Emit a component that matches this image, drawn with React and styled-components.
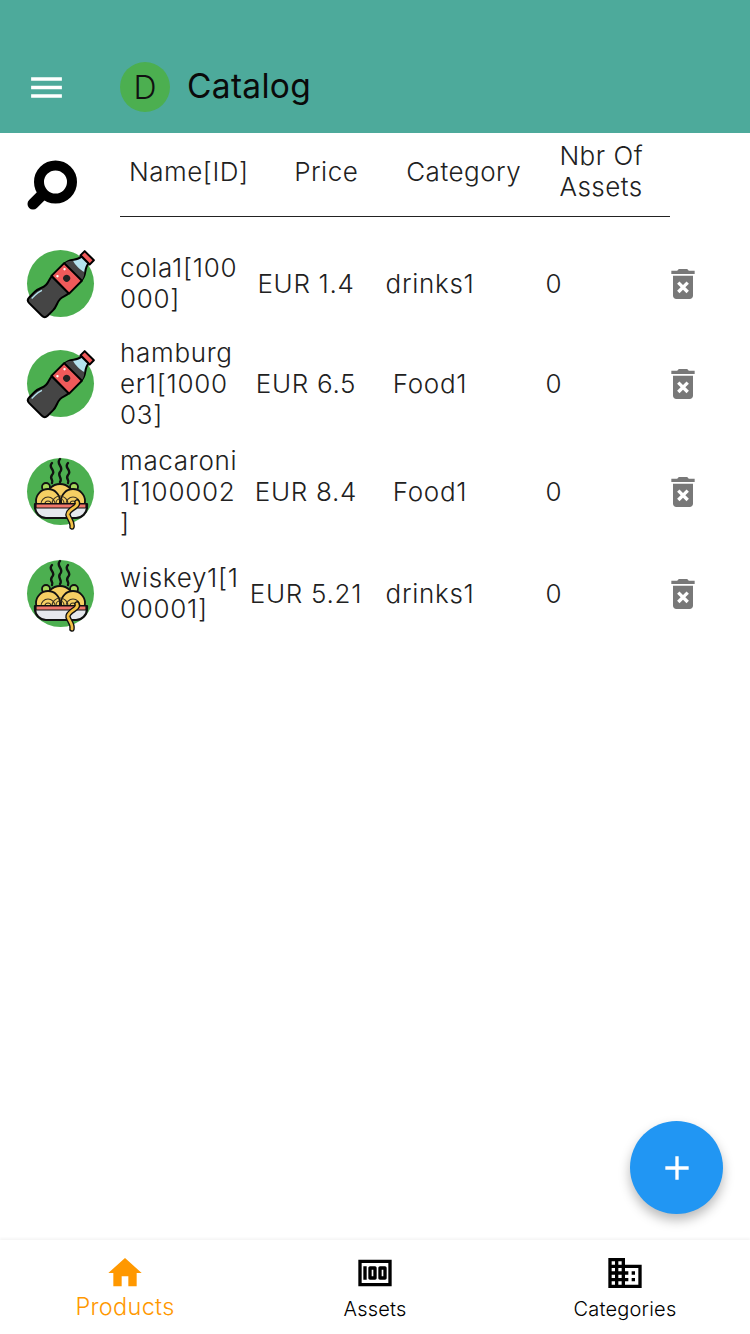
import React from 'react';
import styled, { createGlobalStyle } from 'styled-components';
import { MdMenu, MdHome, MdMoney, MdBusiness, MdDeleteForever, MdAdd } from 'react-icons/md';

const GlobalStyle = createGlobalStyle`
  html, body {
    margin: 0;
    padding: 0;
    background: #ffffff;
    font-family: Inter, "Noto Sans", sans-serif;
  }
`;

const Page = styled.div`
  position: relative;
  display: flex;
  flex-direction: column;
  width: 750px;
  height: 1334px;
  overflow: hidden;
  background: #ffffff;
`;

const Header = styled.header`
  display: flex;
  align-items: center;
  height: 133px;
  padding: 62px 0 21px 26px;
  box-sizing: border-box;
  background: #4daa9b;
`;

const MenuButton = styled.div`
  display: flex;
  width: 94px;
  color: #ffffff;
  font-size: 41px;
`;

const Avatar = styled.div`
  display: flex;
  align-items: center;
  justify-content: center;
  width: 50px;
  height: 50px;
  margin-right: 17px;
  border-radius: 50%;
  background: #4caf50;
  color: #111111;
  font-size: 32px;
  font-weight: 300;
`;

const Title = styled.h1`
  margin: -2px 0 0;
  color: #0a0a0a;
  font-size: 33.5px;
  font-weight: 400;
  letter-spacing: 0.3px;
`;

const Main = styled.main`
  flex: 1;
`;

const TableHead = styled.div`
  display: flex;
  height: 84px;
`;

const SearchCell = styled.div`
  display: flex;
  width: 120px;
  padding: 27px 0 0 27px;
  box-sizing: border-box;
`;

const HeadColumns = styled.div`
  display: grid;
  grid-template-columns: repeat(4, 137.5px);
  width: 550px;
  height: 84px;
  box-sizing: border-box;
  padding-bottom: 7px;
  border-bottom: 1px solid #222222;
`;

const HeadCell = styled.div`
  display: flex;
  align-items: center;
  justify-content: center;
  color: #212121;
  font-size: 26px;
  font-weight: 300;
  letter-spacing: 0.5px;
  line-height: 31px;
  white-space: pre-line;
`;

const Row = styled.div`
  display: grid;
  grid-template-columns: 120px repeat(4, 124px) 134px;
  align-items: center;
  height: ${(p) => p.$height}px;
`;

const Thumb = styled.div`
  display: flex;
  padding-left: 27px;
`;

const NameCell = styled.div`
  width: 122px;
  padding-bottom: 2px;
  color: #212121;
  font-size: 26px;
  font-weight: 300;
  letter-spacing: 0.7px;
  line-height: 31px;
  word-break: break-all;
  line-break: anywhere;
`;

const Cell = styled.div`
  padding-bottom: 2px;
  color: #212121;
  font-size: 26px;
  font-weight: 300;
  letter-spacing: 0.7px;
  line-height: 31px;
  text-align: center;
`;

const DeleteCell = styled.div`
  display: flex;
  justify-content: center;
  color: #787878;
  font-size: 40px;
`;

const Rows = styled.div`
  padding-top: 21px;
`;

const Fab = styled.button`
  position: absolute;
  left: 630px;
  top: 1121px;
  display: flex;
  align-items: center;
  justify-content: center;
  width: 93px;
  height: 93px;
  padding: 0;
  border: none;
  border-radius: 50%;
  background: #2196f3;
  color: #ffffff;
  font-size: 40px;
  box-shadow: 0 6px 12px rgba(0, 0, 0, 0.28);
`;

const BottomNav = styled.nav`
  display: grid;
  grid-template-columns: repeat(3, 1fr);
  height: 94px;
  background: #ffffff;
  box-shadow: 0 -2px 2px rgba(0, 0, 0, 0.04);
`;

const NavItem = styled.div`
  display: flex;
  flex-direction: column;
  align-items: center;
  padding-top: 13px;
  color: ${(p) => (p.$active ? '#ff9800' : '#000000')};
  font-size: 40px;
`;

const NavLabel = styled.span`
  font-size: ${(p) => (p.$active ? 23.5 : 20)}px;
  font-weight: 300;
  letter-spacing: ${(p) => (p.$active ? 0.3 : 0.2)}px;
  line-height: 26px;
  margin-top: ${(p) => (p.$active ? 1 : 3)}px;
`;

const SearchIcon = () => (
  <svg width="52" height="52" viewBox="0 0 52 52">
    <circle cx="28.5" cy="22" r="16.5" fill="none" stroke="#000" strokeWidth="10" />
    <path d="M15 35 L6 44" stroke="#000" strokeWidth="11" strokeLinecap="round" />
  </svg>
);

const BottleIcon = () => (
  <svg width="68" height="68" viewBox="0 0 68 68" overflow="visible">
    <circle cx="33.5" cy="33.5" r="33.5" fill="#4caf50" />
    <g transform="rotate(45 34 34)" strokeLinejoin="round">
      <path d="M27.5 -6 h13 v6 h-13 z" fill="#ef5a5a" stroke="#000" strokeWidth="2" />
      <path d="M29 0 h10 c0 7 7 9 7 17 h-24 c0 -8 7 -10 7 -17 z" fill="#b5e2ee" stroke="#000" strokeWidth="2" />
      <path d="M26 9 c4 1.500 12 1.500 16 0 c2 2 4 5 4 8 h-24 c0 -3 2 -6 4 -8 z" fill="#454545" />
      <path d="M22 35 c0 4 2 6 2 10 c0 5 -3 8 -3 13 v8 c0 3 2 4 4 4 h18 c2 0 4 -1 4 -4 v-8 c0 -5 -3 -8 -3 -13 c0 -4 2 -6 2 -10 z" fill="#454545" stroke="#000" strokeWidth="2" />
      <path d="M25 52 c-1 3 -1.500 5 -1.500 8 v5" fill="none" stroke="#b5e2ee" strokeWidth="1.300" />
      <path d="M21.500 17 h25 v18 h-25 z" fill="#ef5a5a" stroke="#000" strokeWidth="2" />
      <circle cx="34" cy="26" r="3.500" fill="#222" />
      <circle cx="26" cy="21" r="1.200" fill="#fff" />
      <circle cx="26" cy="31" r="1.200" fill="#fff" />
    </g>
  </svg>
);

const NoodleIcon = () => (
  <svg width="68" height="68" viewBox="0 0 68 68" overflow="visible">
    <circle cx="33.500" cy="33.500" r="33.500" fill="#4caf50" />
    <g fill="none" stroke="#111" strokeWidth="2.400" strokeLinecap="round">
      <path d="M25 5 c-5 5 5 7 0 12 c-3 4 2 5 0 8" />
      <path d="M33 1 c-5 5 5 8 0 13 c-3 4 3 6 0 10" />
      <path d="M41 5 c-5 5 5 7 0 12 c-3 4 2 5 0 8" />
    </g>
    <circle cx="19" cy="29" r="4" fill="#a5d65a" stroke="#111" strokeWidth="1.800" />
    <circle cx="47" cy="29" r="4" fill="#a5d65a" stroke="#111" strokeWidth="1.800" />
    <g fill="#f5cf63" stroke="#111" strokeWidth="1.800">
      <circle cx="33" cy="40" r="14" />
      <circle cx="21" cy="43" r="12" />
      <circle cx="46" cy="43" r="12" />
    </g>
    <g fill="none" stroke="#3a3222" strokeWidth="1.100">
      <path d="M25 46 a8 8 0 0 1 16 0" />
      <path d="M29 45 a4 4 0 0 1 8 0" />
      <path d="M14 46 a7 7 0 0 1 14 0" />
      <path d="M39 46 a7 7 0 0 1 14 0" />
      <path d="M18 46 a3 3 0 0 1 6 0" />
      <path d="M43 46 a3 3 0 0 1 6 0" />
    </g>
    <path d="M8 46 h52 v3 c0 6 -5 11 -11 11 h-30 c-6 0 -11 -5 -11 -11 z" fill="#e6e9ee" stroke="#111" strokeWidth="2.200" strokeLinejoin="round" />
    <path d="M9 46 h50 v4 h-50 z" fill="#f0776b" stroke="#111" strokeWidth="1.200" />
    <path d="M50 44 c3 5 -10 7 -9 13 c1 4 5 7 4 12" fill="none" stroke="#111" strokeWidth="5.500" strokeLinecap="round" />
    <path d="M50 44 c3 5 -10 7 -9 13 c1 4 5 7 4 12" fill="none" stroke="#f4c145" strokeWidth="2.800" strokeLinecap="round" />
  </svg>
);

const products = [
  { id: 1, name: 'cola1[100000]', price: 'EUR 1.4', category: 'drinks1', assets: 0, icon: <BottleIcon />, height: 92 },
  { id: 2, name: 'hamburger1[100003]', price: 'EUR 6.5', category: 'Food1', assets: 0, icon: <BottleIcon />, height: 108 },
  { id: 3, name: 'macaroni1[100002]', price: 'EUR 8.4', category: 'Food1', assets: 0, icon: <NoodleIcon />, height: 108 },
  { id: 4, name: 'wiskey1[100001]', price: 'EUR 5.21', category: 'drinks1', assets: 0, icon: <NoodleIcon />, height: 96 },
];

const App = () => (
  <Page>
    <GlobalStyle />
    <Header>
      <MenuButton><MdMenu /></MenuButton>
      <Avatar>D</Avatar>
      <Title>Catalog</Title>
    </Header>
    <Main>
      <TableHead>
        <SearchCell><SearchIcon /></SearchCell>
        <HeadColumns>
          <HeadCell>Name[ID]</HeadCell>
          <HeadCell>Price</HeadCell>
          <HeadCell>Category</HeadCell>
          <HeadCell>{'Nbr Of\nAssets'}</HeadCell>
        </HeadColumns>
      </TableHead>
      <Rows>
        {products.map((item) => (
          <Row key={item.id} $height={item.height}>
            <Thumb>{item.icon}</Thumb>
            <NameCell>{item.name}</NameCell>
            <Cell>{item.price}</Cell>
            <Cell>{item.category}</Cell>
            <Cell>{item.assets}</Cell>
            <DeleteCell><MdDeleteForever /></DeleteCell>
          </Row>
        ))}
      </Rows>
    </Main>
    <Fab><MdAdd /></Fab>
    <BottomNav>
      <NavItem $active><MdHome /><NavLabel $active>Products</NavLabel></NavItem>
      <NavItem><MdMoney /><NavLabel>Assets</NavLabel></NavItem>
      <NavItem><MdBusiness /><NavLabel>Categories</NavLabel></NavItem>
    </BottomNav>
  </Page>
);

export default App;
